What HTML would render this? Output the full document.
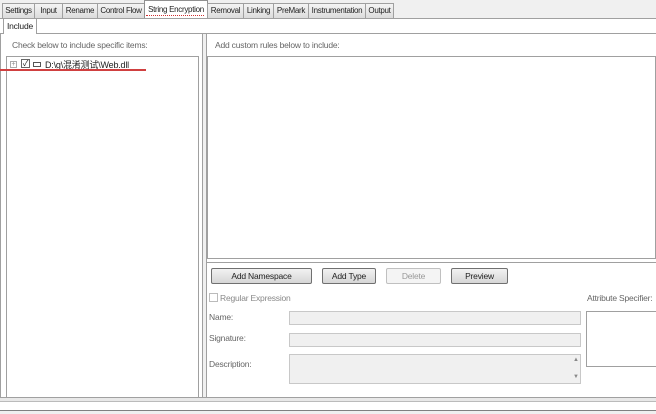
<html><head><style>
body{margin:0;width:656px;height:414px;background:#fff;font-family:"Liberation Sans","Noto Sans CJK SC",sans-serif;font-size:8.5px;color:#222;position:relative;overflow:hidden;letter-spacing:-0.2px}
div{position:absolute;box-sizing:border-box}
.tab{top:3px;height:15px;border:1px solid #a0a0a0;border-bottom:none;background:linear-gradient(#f4f4f4,#dcdcdc);text-align:center;line-height:13px;font-size:8px;letter-spacing:-0.3px;white-space:nowrap}
.btn{top:268px;height:16px;border:1px solid #707070;border-radius:2px;background:linear-gradient(#f2f2f2,#d6d6d6);text-align:center;line-height:14px}
.in{border:1px solid #c8c8c8;background:#f0f0f0}
.lbl{color:#666}
</style></head><body>
<div style="left:0;top:0;width:656px;height:18px;background:#f0f0f0"></div>
<div class="tab" style="left:2px;width:33px">Settings</div>
<div class="tab" style="left:34px;width:29px">Input</div>
<div class="tab" style="left:62px;width:36px">Rename</div>
<div class="tab" style="left:97px;width:48px">Control Flow</div>
<div class="tab" style="left:144px;top:0;height:19px;width:64px;background:#fff;border-color:#909090;line-height:17px">String Encryption</div>
<div style="left:146px;top:15px;width:58px;border-top:1px dotted #d03030;z-index:3"></div>
<div class="tab" style="left:207px;width:37px">Removal</div>
<div class="tab" style="left:243px;width:31px">Linking</div>
<div class="tab" style="left:273px;width:36px">PreMark</div>
<div class="tab" style="left:308px;width:58px">Instrumentation</div>
<div class="tab" style="left:365px;width:29px">Output</div>
<div style="left:0;top:18px;width:656px;border-top:1px solid #a0a0a0"></div>
<div style="left:3px;top:18px;width:34px;height:16px;border:1px solid #a0a0a0;border-bottom:none;background:#fff;line-height:15px;text-align:center;z-index:2">Include</div>
<div style="left:0;top:33px;width:656px;border-top:1px solid #a0a0a0"></div>
<div style="left:0;top:34px;width:2px;height:364px;border-left:1px solid #a0a0a0"></div>
<div style="left:12px;top:40px" class="lbl">Check below to include specific items:</div>
<div style="left:202px;top:34px;width:5px;height:364px;border-left:1px solid #a0a0a0;border-right:1px solid #a0a0a0;background:#f0f0f0"></div>
<div style="left:6px;top:56px;width:193px;height:342px;border:1px solid #a0a0a0"></div>
<div style="left:10px;top:61px;width:7px;height:7px;border:1px solid #aaa;font-size:7px;line-height:5px;text-align:center;color:#888">+</div>
<div style="left:21px;top:59px;width:9px;height:9px;border:1px solid #666;font-size:8px;line-height:8px;text-align:center">✓</div>
<div style="left:33px;top:62px;width:8px;height:5px;border:1px solid #555"></div>
<div style="left:45px;top:58px;font-size:9px">D:\g\混淆测试\Web.dll</div>
<div style="left:0;top:69px;width:146px;height:2px;background:#d04040"></div>
<div style="left:215px;top:40px" class="lbl">Add custom rules below to include:</div>
<div style="left:207px;top:56px;width:449px;height:203px;border:1px solid #a0a0a0"></div>
<div style="left:207px;top:262px;width:449px;border-top:1px solid #a0a0a0"></div>
<div class="btn" style="left:211px;width:101px">Add Namespace</div>
<div class="btn" style="left:322px;width:54px">Add Type</div>
<div class="btn" style="left:386px;width:55px;border-color:#c0c0c0;background:#f4f4f4;color:#999">Delete</div>
<div class="btn" style="left:451px;width:57px">Preview</div>
<div style="left:209px;top:293px;width:9px;height:9px;border:1px solid #bbb"></div>
<div class="lbl" style="left:220px;top:293px;color:#888">Regular Expression</div>
<div class="lbl" style="left:587px;top:293px">Attribute Specifier:</div>
<div class="lbl" style="left:209px;top:312px">Name:</div>
<div class="in" style="left:289px;top:311px;width:292px;height:14px"></div>
<div class="lbl" style="left:209px;top:333px">Signature:</div>
<div class="in" style="left:289px;top:333px;width:292px;height:14px"></div>
<div class="lbl" style="left:209px;top:359px">Description:</div>
<div class="in" style="left:289px;top:354px;width:292px;height:30px"></div>
<div style="left:573px;top:357px;font-size:6px;color:#888">▲</div>
<div style="left:573px;top:374px;font-size:6px;color:#888">▼</div>
<div style="left:586px;top:311px;width:72px;height:56px;border:1px solid #a0a0a0"></div>
<div style="left:0;top:397px;width:656px;border-top:1px solid #a0a0a0"></div>
<div style="left:0;top:398px;width:656px;height:3px;background:#e8e8e8"></div>
<div style="left:0;top:401px;width:656px;height:10px;border-top:1px solid #bbb;border-bottom:1px solid #808080;background:#fff"></div>
<div style="left:0;top:411px;width:656px;height:3px;background:#f0f0f0"></div>
</body></html>
